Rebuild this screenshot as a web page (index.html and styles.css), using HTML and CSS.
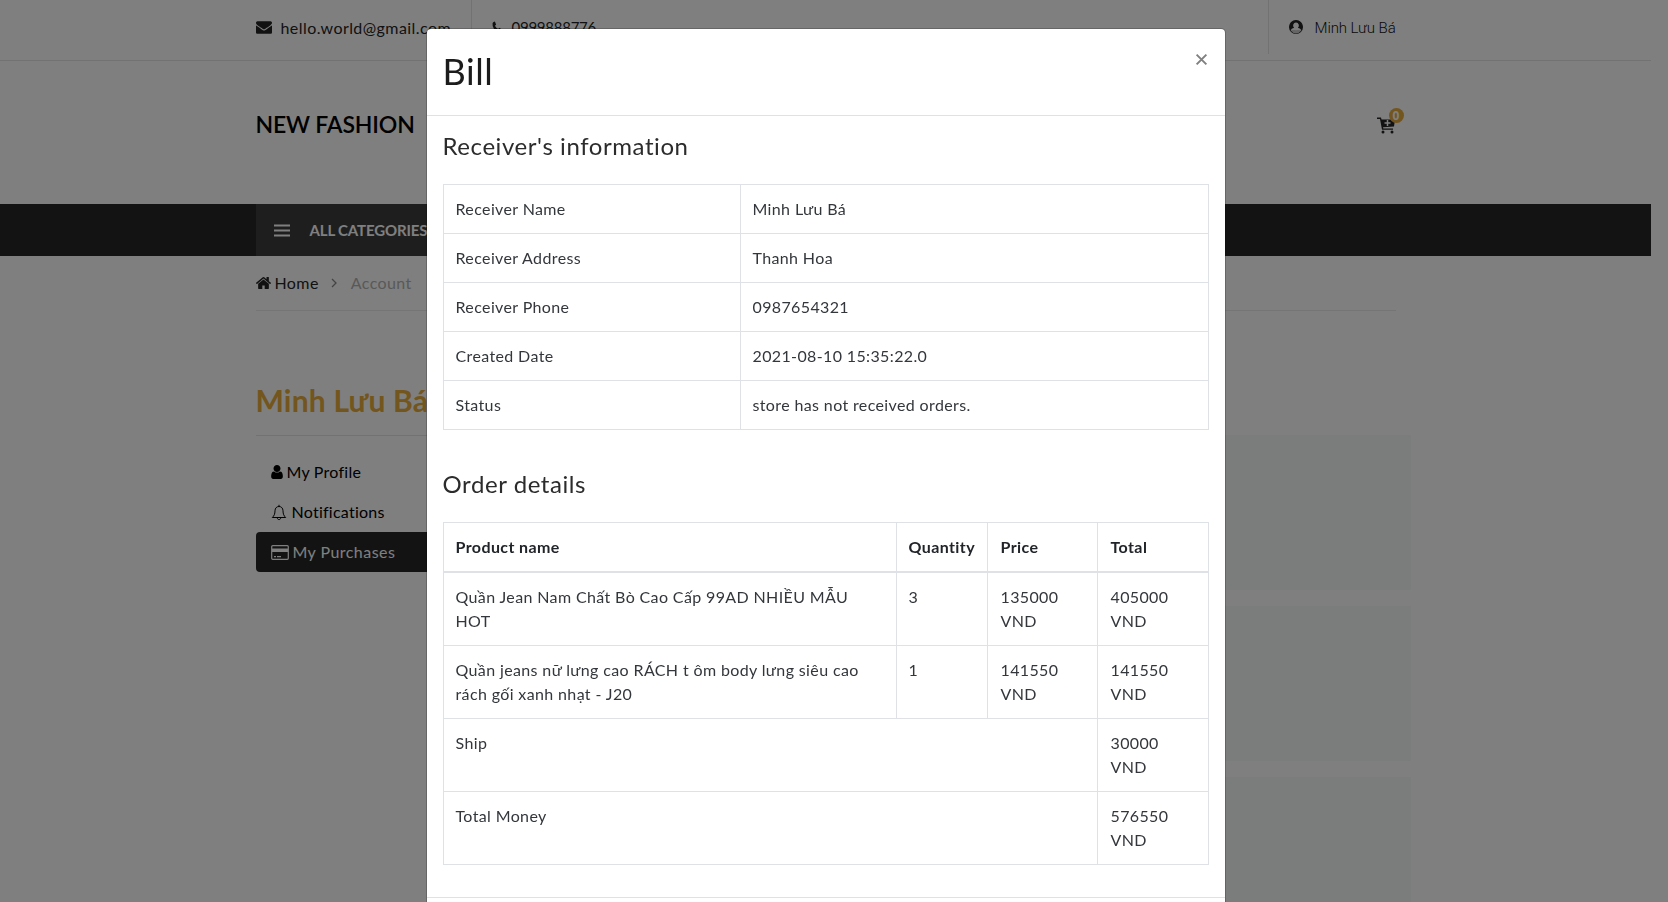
FILE: index.html
```html
<!DOCTYPE html>
<html lang="vi">
<head>
<meta charset="utf-8">
<title>New Fashion</title>
<link rel="stylesheet" href="styles.css">
</head>
<body>
<div class="page">
  <header class="topbar">
    <div class="container topbar-row">
      <div class="mail"><svg class="ic-mail" viewBox="0 0 1792 1792"><path d="M1792 710v794q0 66-47 113t-113 47H160q-66 0-113-47T0 1504V710q44 49 101 87 362 246 497 345 57 42 92.500 65.500t94.500 48 110 24.500h2q51 0 110-24.500t94.500-48T1194 1142q170-123 498-345 57-39 100-87zm0-294q0 79-49 151t-122 123q-376 261-468 325-10 7-42.500 31t-54 38.500-52 32.500-57.500 27-50 9h-2q-23 0-50-9t-57.500-27-52-32.500-54-38.500-42.500-31q-91-64-262-182.500T171 690q-62-42-117-115.500T0 438q0-78 41.500-130T160 256h1472q65 0 112.500 47t47.500 113z"/></svg><span class="mail-text">hello.world@gmail.com</span></div>
      <div class="phone"><svg class="ic-phone" viewBox="0 0 14 16"><path d="M2 3q1-2 3-2l1.500 4L5 6.500q1 2.500 4 4L10.500 9l3 2q0 2.500-3 3Q1 12 2 3z"/></svg><span>0999888776</span></div>
      <div class="account"><svg class="ic-user" viewBox="0 0 16 16"><circle cx="8" cy="8" r="6.400"/><path d="M8 3.600a2.900 2.900 0 0 0-1.900 5.100L5 9.300c-1.200.3-1.900 1-2.300 2.300A6.400 6.400 0 0 0 8 14.400a6.400 6.400 0 0 0 5.300-2.800c-.4-1.300-1.100-2-2.300-2.300l-1.100-.6A2.900 2.900 0 0 0 8 3.600z" class="cut"/><path class="base" d="M2.700 11.800C4 10.800 5 11.200 8 11.200s4-.4 5.300.6A6.400 6.400 0 0 1 8 14.800a6.400 6.400 0 0 1-5.300-3z"/></svg><span>Minh Lưu Bá</span></div>
    </div>
  </header>
  <div class="container brand-row">
    <div class="brand">NEW FASHION</div>
    <div class="cart"><svg class="ic-cart" viewBox="0 0 18 17"><path d="M0 .5h4l.5 2H18l-1 7L6 10.200l.3 1.300H16v1.300H5L3 2H0z"/><circle cx="6" cy="15" r="1.500"/><circle cx="15" cy="15" r="1.500"/><path class="plus" d="M10.500 3v6M7.500 6h6"/></svg><span class="badge">0</span></div>
  </div>
  <nav class="nav">
    <div class="container"><div class="categories"><svg class="ic-bars" viewBox="0 0 16 13"><path d="M0 1.500h16M0 6.500h16M0 11.500h16"/></svg><span>ALL CATEGORIES</span></div></div>
  </nav>
  <main class="container">
    <div class="crumbs">
      <svg class="ic-home" viewBox="90 250 1612 1290"><path d="M1472 992v480q0 26-19 45t-45 19h-384v-384H768v384H384q-26 0-45-19t-19-45V992q0-1 .5-3t.5-3l575-474 575 474q1 2 1 6zm223-69l-62 74q-8 9-21 11h-3q-13 0-21-7L896 424 204 1001q-12 8-24 7-13-2-21-11l-62-74q-8-10-7-23.500T101 878l719-599q32-26 76-26t76 26l244 204V288q0-14 9-23t23-9h192q14 0 23 9t9 23v408l219 182q10 8 11 21.500t-7 23.500z"/></svg>
      <span class="home">Home</span>
      <svg class="ic-chev" viewBox="0 0 6 10"><path d="M1 1l4 4-4 4"/></svg>
      <span class="here">Account</span>
    </div>
    <div class="columns">
      <aside class="side">
        <h2 class="side-title">Minh Lưu Bá</h2>
        <ul class="menu">
          <li><svg class="ic-person" viewBox="256 128 1280 1536"><path d="M1536 1399q0 109-62.500 187t-150.500 78H469q-88 0-150.500-78T256 1399q0-85 8.500-160.500t31.500-152 58.500-131 94-89T583 832q131 128 313 128t313-128q76 0 134.500 34.500t94 89 58.500 131 31.500 152 8.500 160.500zm-256-887q0 159-112.500 271.500T896 896 624.500 783.500 512 512t112.500-271.500T896 128t271.500 112.500T1280 512z"/></svg>My Profile</li>
          <li><svg class="ic-bell" viewBox="0 0 16 17"><path d="M1.300 13.500C3 12 4 10 4 6.800 4 4 5.800 2.500 8 2.500s4 1.500 4 4.300c0 3.200 1 5.200 2.700 6.700zM8 2.500V.8M6.300 13.700c0 1.200.7 1.900 1.700 1.900s1.700-.7 1.700-1.900"/></svg>Notifications</li>
          <li class="active"><svg class="ic-card" viewBox="0 0 18 15"><rect x=".7" y=".7" width="16.600" height="13.600" rx="1"/><path class="stripe" d="M1 3.500h16v3.500H1z"/><path d="M3 11.700h2M6 11.700h4"/></svg>My Purchases</li>
        </ul>
      </aside>
      <section class="orders"><div class="order"></div><div class="order"></div><div class="order"></div></section>
    </div>
  </main>
</div>
<div class="overlay">
  <div class="modal">
    <div class="modal-head"><h1>Bill</h1><svg class="close" viewBox="0 0 12 12"><path d="M1.500 1.500l9 9M10.500 1.500l-9 9"/></svg></div>
    <div class="modal-body">
      <h4>Receiver's information</h4>
      <table class="info">
        <colgroup><col class="c-label"><col></colgroup>
        <tr><td>Receiver Name</td><td>Minh Lưu Bá</td></tr>
        <tr><td>Receiver Address</td><td>Thanh Hoa</td></tr>
        <tr><td>Receiver Phone</td><td>0987654321</td></tr>
        <tr><td>Created Date</td><td>2021-08-10 15:35:22.0</td></tr>
        <tr><td>Status</td><td>store has not received orders.</td></tr>
      </table>
      <h4 class="second">Order details</h4>
      <table class="details">
        <colgroup><col class="c-name"><col class="c-qty"><col class="c-price"><col></colgroup>
        <thead><tr><th>Product name</th><th>Quantity</th><th class="money">Price</th><th class="money">Total</th></tr></thead>
        <tbody>
        <tr><td>Quần Jean Nam Chất Bò Cao Cấp 99AD NHIỀU MẪU<br>HOT</td><td>3</td><td class="money">135000<br>VND</td><td class="money">405000<br>VND</td></tr>
        <tr><td>Quần jeans nữ lưng cao RÁCH t ôm body lưng siêu cao<br>rách gối xanh nhạt - J20</td><td>1</td><td class="money">141550<br>VND</td><td class="money">141550<br>VND</td></tr>
        <tr><td colspan="3">Ship</td><td class="money">30000<br>VND</td></tr>
        <tr><td colspan="3">Total Money</td><td class="money">576550<br>VND</td></tr>
        </tbody>
      </table>
    </div>
    <div class="modal-foot"></div>
  </div>
</div>
</body>
</html>
```
FILE: styles.css
```css
* { box-sizing: border-box; }
html, body { height: 100%; }
body {
  margin: 0;
  overflow: hidden;
  background: #fff;
  color: #212529;
  font-family: Lato, "Open Sans", sans-serif;
  font-size: 16px;
  line-height: 24px;
  letter-spacing: .4px;
}
h1, h2, h4, ul { margin: 0; padding: 0; font-weight: 400; list-style: none; }
svg { display: block; flex: none; fill: currentColor; }
.page { height: 902px; padding-right: 17px; overflow: hidden; }
.container { width: 1140px; margin: 0 auto; }

.topbar { height: 61px; border-bottom: 1px solid #e5e5e5; color: #252525; }
.topbar-row { display: flex; height: 54px; }
.topbar-row > div { display: flex; align-items: center; white-space: nowrap; }
.mail { width: 216px; border-right: 1px solid #e5e5e5; }
.mail-text { padding-top: 1px; letter-spacing: .43px; }
.ic-mail { width: 16px; height: 16px; margin-right: 9px; }
.phone { padding-left: 19px; font-size: 15px; letter-spacing: -.25px; }
.ic-phone { width: 11px; height: 14px; margin-right: 10px; }
.account { margin-left: auto; width: 128px; padding-left: 19px; border-left: 1px solid #e5e5e5; font-family: Roboto, sans-serif; font-weight: 300; font-size: 15px; letter-spacing: -.08px; }
.account span { padding-top: 2px; color: #111; }
.ic-user { width: 16px; height: 16px; margin-right: 11px; }
.ic-user circle { fill: currentColor; stroke: currentColor; stroke-width: 1.200; }
.cut { fill: #fff; }
.base { fill: currentColor; fill-opacity: .25; }

.brand-row { display: flex; align-items: center; height: 143px; padding-bottom: 14px; }
.brand { padding-bottom: 3px; color: #000; font-size: 23px; font-weight: 600; letter-spacing: -.15px; }
.cart { position: relative; margin: 0 1px 0 auto; color: #252525; }
.ic-cart { width: 18px; height: 17px; }
.plus { stroke: #fff; stroke-width: 1.500; }
.badge { position: absolute; left: 12px; top: -9px; width: 15px; height: 15px; border-radius: 50%; background: #e7ab3c; color: #fff; font: 700 12px/15px "Open Sans", sans-serif; text-align: center; letter-spacing: 0; }

.nav { height: 52px; background: #262626; }
.categories { display: flex; align-items: center; width: 255px; height: 52px; padding-left: 18px; background: #3c3c3c; color: #fff; font-size: 15px; font-weight: 700; letter-spacing: -.15px; white-space: nowrap; }
.ic-bars { width: 16px; height: 13px; margin-right: 20px; stroke: currentColor; stroke-width: 2.200; }

.crumbs { display: flex; align-items: center; height: 55px; border-bottom: 1px solid #ebebeb; color: #252525; }
.ic-home { width: 15px; height: 12px; margin-right: 4px; }
.ic-chev, .ic-bell { fill: none; stroke: currentColor; }
.ic-chev { width: 6px; height: 10px; margin: 0 14px 0 12px; color: #888; stroke-width: 1.300; }
.here { color: #b2b2b2; }
.columns { display: flex; padding-top: 68px; margin-right: -15px; }
.side { width: 270px; }
.side-title { height: 57px; border-bottom: 1px solid #e5e5e5; color: #e7ab3c; font-size: 30px; line-height: 43px; font-weight: 700; letter-spacing: .2px; }
.menu { padding-top: 16px; color: #000; letter-spacing: .25px; }
.menu li { display: flex; align-items: center; height: 40px; padding-left: 15px; }
.menu .active { border-radius: 4px; background: #262626; color: #fff; letter-spacing: .45px; }
.ic-person { width: 12px; height: 14px; margin-right: 4px; }
.ic-bell { width: 16px; height: 17px; margin-right: 5px; }
.ic-card { width: 18px; height: 15px; margin-right: 4px; fill: none; stroke: currentColor; stroke-width: 1.200; }
.stripe { fill: currentColor; stroke: none; }
.orders { flex: 1; display: grid; gap: 16px; padding-top: 56px; }
.order { height: 155px; background: #f4faf7; }

.overlay { position: fixed; inset: 0; padding: 28px 17px 0 0; background: rgba(0, 0, 0, .5); overflow: hidden; }
.modal { width: 800px; height: 960px; margin: 0 auto; border: 1px solid rgba(0, 0, 0, .2); border-radius: 5px; background: #fff; background-clip: padding-box; }
.modal-head { display: flex; justify-content: space-between; height: 87px; padding: 16px; border-bottom: 1px solid #dee2e6; color: #1c1c1c; }
.modal-head h1 { font-size: 36px; line-height: 52px; letter-spacing: .6px; }
.close { width: 13px; height: 13px; margin: 8px 1px; fill: none; stroke: #808080; stroke-width: 1.800; }
.modal-body { padding: 16px; color: #33373b; }
h4 { height: 52px; font-size: 24px; line-height: 27px; color: #2c2c2c; letter-spacing: .57px; }
.second { margin-top: 40px; }
table { width: 766px; border-collapse: collapse; table-layout: fixed; }
td, th { padding: 12px; border: 1px solid #dee2e6; text-align: left; vertical-align: top; white-space: nowrap; }
td { font-weight: 400; letter-spacing: .37px; }
th { color: #212529; font-weight: 700; border-bottom-width: 2px; }
.money { padding-left: 13px; }
.c-label { width: 297px; }
.c-name { width: 453px; }
.c-qty { width: 91px; }
.c-price { width: 110px; }
.modal-foot { margin-top: 16px; border-top: 1px solid #dee2e6; }
```
